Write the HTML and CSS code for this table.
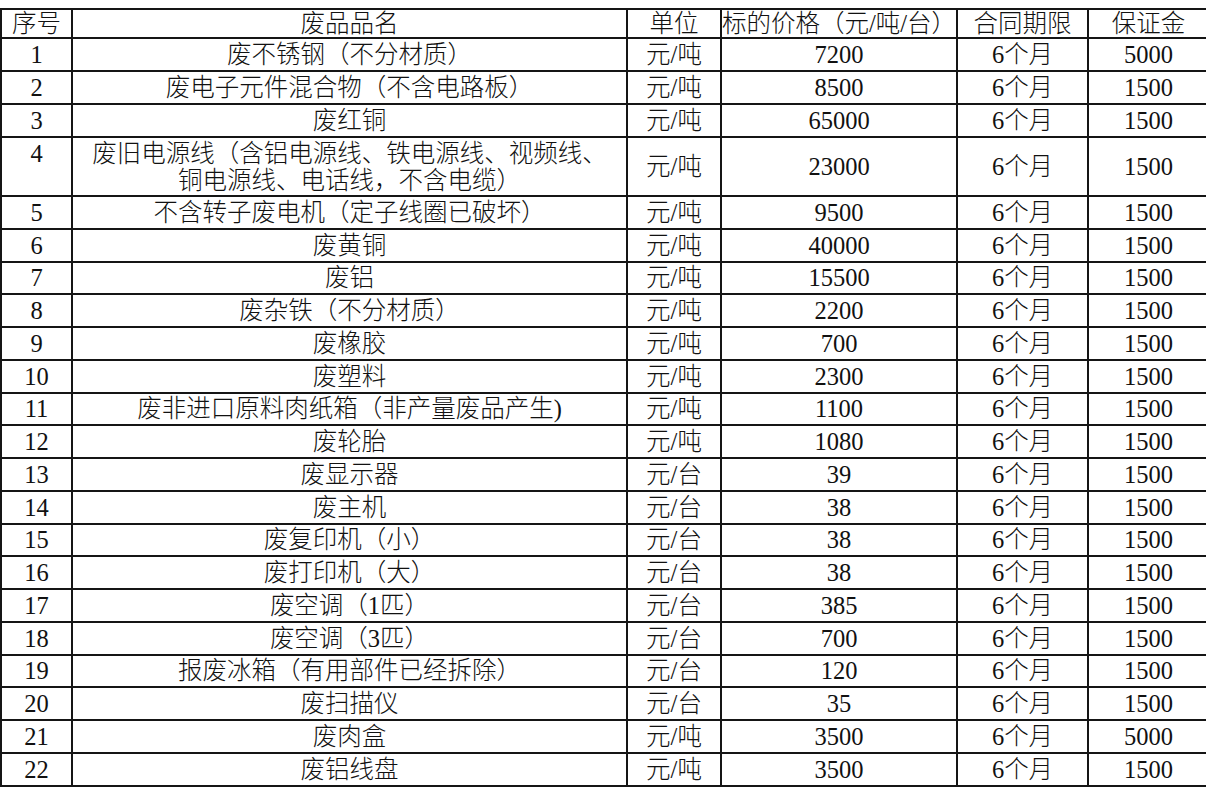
FILE: index.html
```html
<!DOCTYPE html>
<html lang="zh-CN">
<head>
<meta charset="utf-8">
<title>废品价格表</title>
<link rel="stylesheet" href="styles.css">
</head>
<body>
<div class="sheet">
<table class="grid">
<colgroup>
<col class="c-no"><col class="c-name"><col class="c-unit"><col class="c-price"><col class="c-term"><col class="c-dep">
</colgroup>
<tbody>
<tr class="r-head"><td>序号</td><td>废品品名</td><td>单位</td><td class="tight">标的价格（元/吨/台）</td><td>合同期限</td><td>保证金</td></tr>
<tr class="r-a"><td>1</td><td>废不锈钢（不分材质）</td><td>元/吨</td><td>7200</td><td>6个月</td><td>5000</td></tr>
<tr class="r-a"><td>2</td><td>废电子元件混合物（不含电路板）</td><td>元/吨</td><td>8500</td><td>6个月</td><td>1500</td></tr>
<tr class="r-a"><td>3</td><td>废红铜</td><td>元/吨</td><td>65000</td><td>6个月</td><td>1500</td></tr>
<tr class="r-tall"><td class="top">4</td><td class="wrap">废旧电源线（含铝电源线、铁电源线、视频线、<br>铜电源线、电话线，不含电缆）</td><td>元/吨</td><td>23000</td><td>6个月</td><td>1500</td></tr>
<tr class="r-b"><td>5</td><td>不含转子废电机（定子线圈已破坏）</td><td>元/吨</td><td>9500</td><td>6个月</td><td>1500</td></tr>
<tr class="r-b"><td>6</td><td>废黄铜</td><td>元/吨</td><td>40000</td><td>6个月</td><td>1500</td></tr>
<tr class="r-b"><td>7</td><td>废铝</td><td>元/吨</td><td>15500</td><td>6个月</td><td>1500</td></tr>
<tr class="r-b"><td>8</td><td>废杂铁（不分材质）</td><td>元/吨</td><td>2200</td><td>6个月</td><td>1500</td></tr>
<tr class="r-b"><td>9</td><td>废橡胶</td><td>元/吨</td><td>700</td><td>6个月</td><td>1500</td></tr>
<tr class="r-b"><td>10</td><td>废塑料</td><td>元/吨</td><td>2300</td><td>6个月</td><td>1500</td></tr>
<tr class="r-b"><td>11</td><td>废非进口原料肉纸箱（非产量废品产生)</td><td>元/吨</td><td>1100</td><td>6个月</td><td>1500</td></tr>
<tr class="r-b"><td>12</td><td>废轮胎</td><td>元/吨</td><td>1080</td><td>6个月</td><td>1500</td></tr>
<tr class="r-b"><td>13</td><td>废显示器</td><td>元/台</td><td>39</td><td>6个月</td><td>1500</td></tr>
<tr class="r-b"><td>14</td><td>废主机</td><td>元/台</td><td>38</td><td>6个月</td><td>1500</td></tr>
<tr class="r-b"><td>15</td><td>废复印机（小）</td><td>元/台</td><td>38</td><td>6个月</td><td>1500</td></tr>
<tr class="r-b"><td>16</td><td>废打印机（大）</td><td>元/台</td><td>38</td><td>6个月</td><td>1500</td></tr>
<tr class="r-b"><td>17</td><td>废空调（1匹）</td><td>元/台</td><td>385</td><td>6个月</td><td>1500</td></tr>
<tr class="r-b"><td>18</td><td>废空调（3匹）</td><td>元/台</td><td>700</td><td>6个月</td><td>1500</td></tr>
<tr class="r-b"><td>19</td><td>报废冰箱（有用部件已经拆除）</td><td>元/台</td><td>120</td><td>6个月</td><td>1500</td></tr>
<tr class="r-b"><td>20</td><td>废扫描仪</td><td>元/台</td><td>35</td><td>6个月</td><td>1500</td></tr>
<tr class="r-b"><td>21</td><td>废肉盒</td><td>元/吨</td><td>3500</td><td>6个月</td><td>5000</td></tr>
<tr class="r-b"><td>22</td><td>废铝线盘</td><td>元/吨</td><td>3500</td><td>6个月</td><td>1500</td></tr>
</tbody>
</table>
</div>
</body>
</html>
```
FILE: styles.css
```css
html, body {
  margin: 0;
  padding: 0;
  background: #ffffff;
}
.sheet {
  width: 1206px;
  height: 801px;
  overflow: hidden;
  padding-top: 8px;
  box-sizing: border-box;
}
.grid {
  border-collapse: collapse;
  table-layout: fixed;
  width: 1208px;
  font-family: "Liberation Serif", "Noto Sans CJK SC", serif;
  font-size: 24.5px;
  font-weight: 300;
  color: #111;
}
.c-no { width: 71px; }
.c-name { width: 555px; }
.c-unit { width: 94px; }
.c-price { width: 236px; }
.c-term { width: 131px; }
.c-dep { width: 121px; }
.grid td {
  border: 2px solid #151515;
  padding: 0;
  text-align: center;
  vertical-align: middle;
  white-space: nowrap;
  line-height: 27px;
  overflow: hidden;
}
.r-head { height: 29px; }
.r-a { height: 33px; }
.r-tall { height: 59px; }
.r-b { height: 32.765px; }
.grid td.top {
  vertical-align: top;
  padding-top: 2px;
}
.grid td.wrap {
  line-height: 27px;
}
.grid td.tight {
  letter-spacing: 0;
}
```
